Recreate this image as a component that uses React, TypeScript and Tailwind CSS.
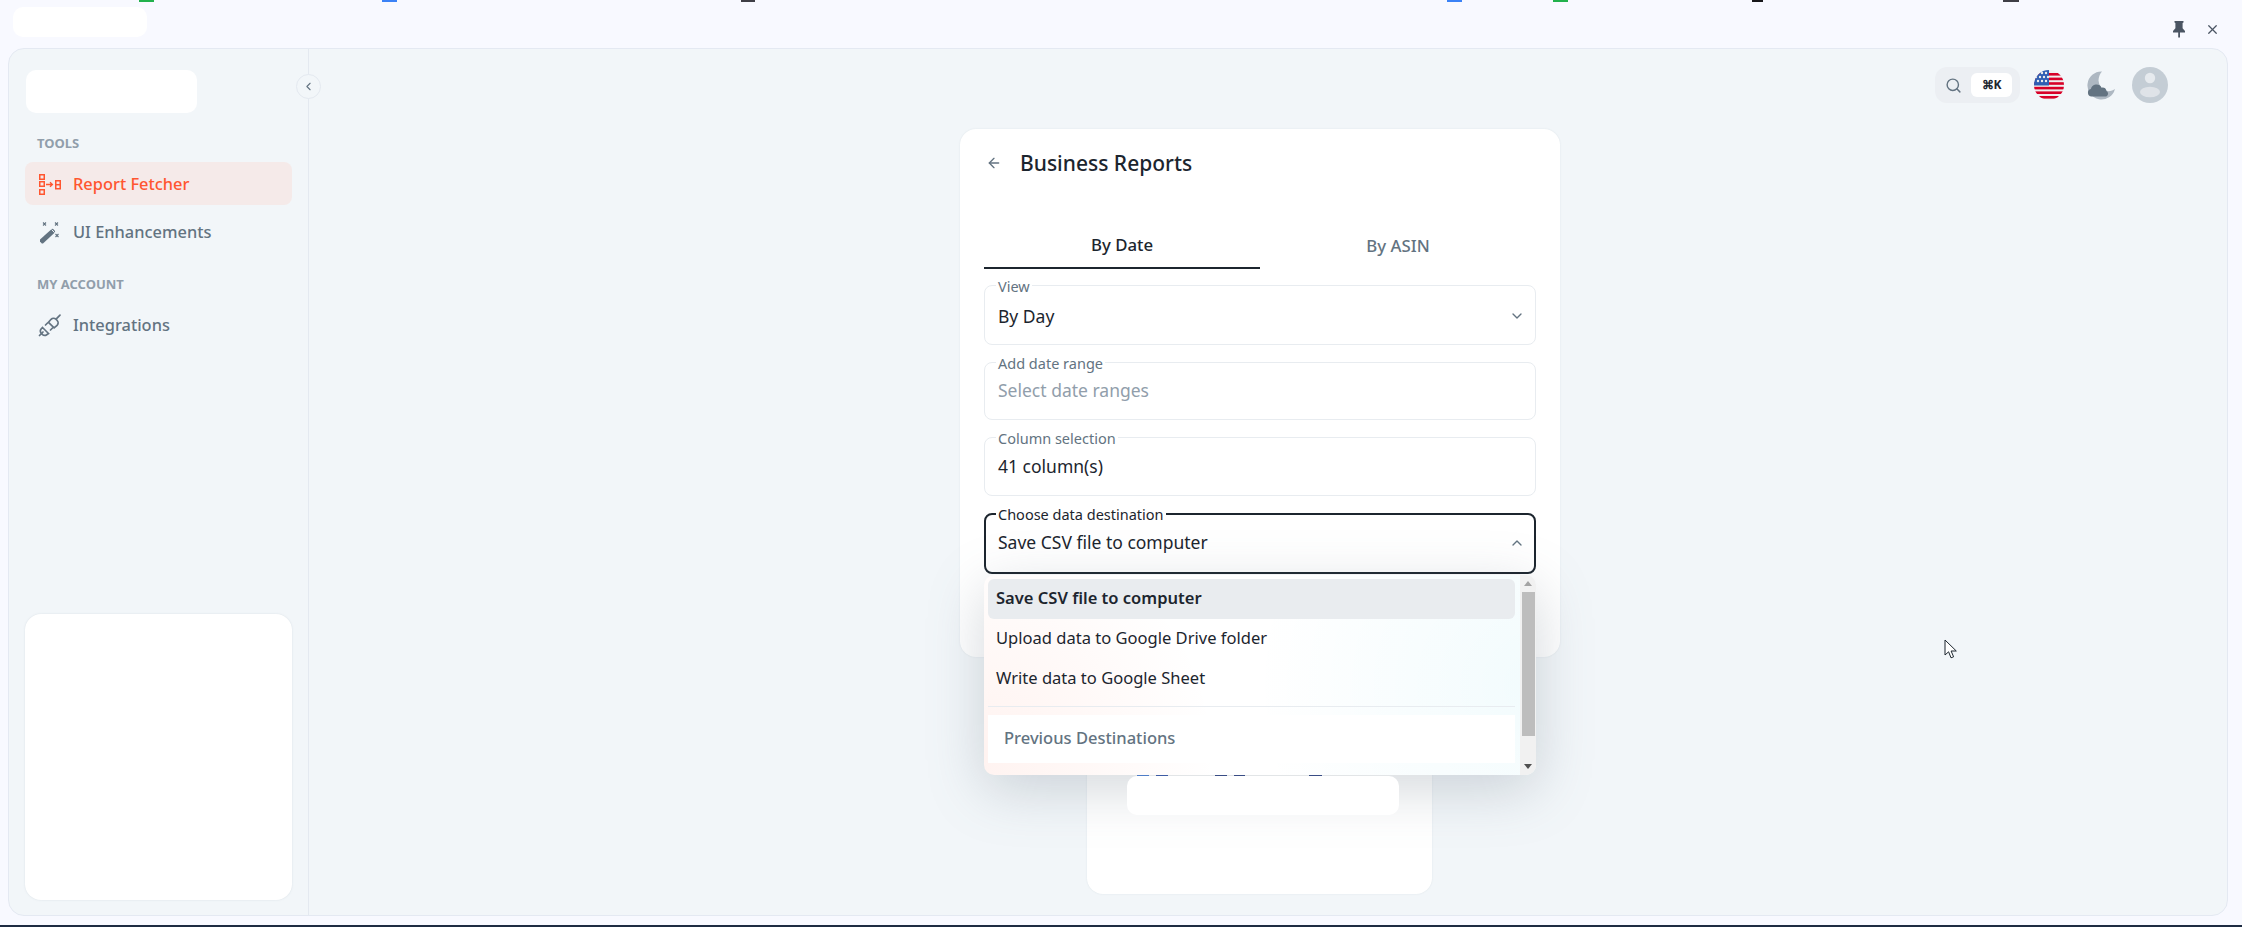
import { ArrowLeft, ChevronDown, ChevronLeft, ChevronUp, Search, X } from "lucide-react";

const ReportIcon = () => (
  <svg width="24" height="24" viewBox="0 0 24 24" fill="none" stroke="#ff5630" strokeWidth="1.5">
    <rect x="1.75" y="2.75" width="4.5" height="4.5" />
    <rect x="1.75" y="9.75" width="4.5" height="4.5" />
    <rect x="1.75" y="17.75" width="4.5" height="4.5" />
    <path d="M8 12.5h6M12 10.3l2.4 2.2-2.4 2.2" strokeWidth="1.3" />
    <rect x="17.75" y="8.75" width="4.5" height="8" />
    <path d="M17.75 12.7h4.5" />
  </svg>
);

const WandIcon = () => (
  <svg width="24" height="24" viewBox="0 0 24 24" fill="none">
    <path d="M2 19.5 14 8.8l1.2.2 1.8 2 .1 1.3L5 23.5H3.8L2 21.5z" fill="#637381" />
    <path d="M13.6 9.5l3 3.2" stroke="#f1f5f9" strokeWidth="1" />
    <path d="M5 2.5l3 3M8 2.5l-3 3M17 2.5l3 3M20 2.5l-3 3M17.5 14l3 3M20.5 14l-3 3" stroke="#637381" strokeWidth="1.1" />
  </svg>
);

const PlugIcon = () => (
  <svg width="24" height="24" viewBox="0 0 24 24" fill="none" stroke="#637381" strokeWidth="1.7" strokeLinecap="round">
    <path d="M1.5 22.5 5 19" />
    <path d="M4.5 14.5l6 6-1.8 1.2a3.4 3.4 0 0 1-4.4-.4l-1-1a3.4 3.4 0 0 1-.2-4.3z" />
    <path d="M7.5 12l2-2M12.5 17l2-2" />
    <path d="M10.5 9.3l5.6 5.6 3-2.6a3.4 3.4 0 0 0 .1-4.8l-1.3-1.3a3.4 3.4 0 0 0-4.8.1z" />
    <path d="M18.8 5.4 22 2.2" />
  </svg>
);

const PinIcon = () => (
  <svg width="16" height="18" viewBox="0 0 16 18" fill="#4b5563">
    <path d="M3.5 1h9v1.5L11.6 3v5.2L14 11v1.5H9v5H7.2v-5H2V11l2.4-2.8V3l-.9-.5z" />
  </svg>
);

const FlagIcon = () => (
  <svg width="30" height="30" viewBox="0 0 30 30">
    <defs>
      <clipPath id="flag-clip">
        <circle cx="15" cy="15" r="15" />
      </clipPath>
    </defs>
    <g clipPath="url(#flag-clip)">
      <rect width="30" height="30" fill="#eeeeee" />
      {[3, 7.6, 12.2, 16.8, 21.4, 26].map((y) => (
        <rect key={y} x="0" y={y} width="30" height="2.6" fill="#d80027" />
      ))}
      <rect width="15" height="15.5" fill="#2f5fb3" />
      {[[4, 3], [8, 3], [12, 3], [2, 7], [6, 7], [10, 7], [4, 11], [8, 11], [12, 11], [14, 7]].map(([cx, cy], i) => (
        <circle key={i} cx={cx} cy={cy} r="1.2" fill="#eeeeee" />
      ))}
    </g>
  </svg>
);

const MoonIcon = () => (
  <svg width="30" height="30" viewBox="0 0 30 30">
    <path d="M16 1.5A14 14 0 1 0 29 19c-1.5 1.2-4 2.2-6.5 2.2A11 11 0 0 1 12.5 10.5C12.5 7 14 3.6 16 1.5z" fill="#aeb8c2" />
    <path d="M5.5 26.5a3.8 3.8 0 0 1-.6-7.5 5.6 5.6 0 0 1 10.6-1.3 4.4 4.4 0 0 1 5 3.4 3 3 0 0 1-.2 5.4z" fill="#637381" />
  </svg>
);

const AvatarIcon = () => (
  <svg width="36" height="36" viewBox="0 0 36 36">
    <circle cx="18" cy="18" r="18" fill="#c4cdd5" />
    <circle cx="18" cy="11" r="5.2" fill="#e6eaee" />
    <ellipse cx="18" cy="25" rx="10" ry="5.2" fill="#dfe3e8" />
  </svg>
);

const Cursor = () => (
  <svg width="14" height="21" viewBox="0 0 14 21" className="absolute left-[1944px] top-[639px] z-50">
    <path d="M1 1v15l3.6-3.2 2.4 6 2.6-1-2.5-5.8H12.3z" fill="#ffffff" stroke="#1c252e" strokeWidth="1" />
  </svg>
);

const Field = ({ label, className, labelClass, children }: { label: string; className: string; labelClass?: string; children: React.ReactNode }) => (
  <div className={`relative flex items-center justify-between rounded-[8px] bg-white ${className}`}>
    <span className={`absolute bg-white px-[2px] text-[14.5px] leading-[14px] ${labelClass ?? "left-[11px] top-[-7px] text-[#637381]"}`}>{label}</span>
    {children}
  </div>
);

const NavItem = ({ icon, label, active }: { icon: React.ReactNode; label: string; active?: boolean }) => (
  <div className={`flex h-[43px] w-[267px] items-center gap-[11px] rounded-[8px] pl-[13px] text-[16.4px] font-medium ${active ? "bg-[#f5eae9] text-[#ff5630]" : "text-[#637381]"}`}>
    {icon}
    <span className="pt-[2px]">{label}</span>
  </div>
);

export default function App() {
  return (
    <div className="relative flex h-[927px] w-full flex-col overflow-hidden bg-[#f8f9ff] font-['Noto_Sans',sans-serif] text-[#1c252e]">
      {/* Clipped content of the page behind */}
      <div className="flex h-[2px] shrink-0">
        <span className="ml-[139px] w-[15px] bg-[#22b14c]" />
        <span className="ml-[228px] w-[15px] bg-[#3b82f6]" />
        <span className="ml-[344px] w-[14px] bg-[#3f3f46]" />
        <span className="ml-[692px] w-[15px] bg-[#3b82f6]" />
        <span className="ml-[91px] w-[15px] bg-[#22b14c]" />
        <span className="ml-[184px] w-[11px] bg-[#18181b]" />
        <span className="ml-[240px] w-[16px] bg-[#3f3f46]" />
      </div>

      {/* Window bar */}
      <div className="flex h-[46px] shrink-0 justify-between">
        <div className="ml-[13px] mt-[5px] h-[30px] w-[134px] rounded-[10px] bg-white" />
        <div className="mr-[22px] mt-[18px] flex h-[18px] items-center gap-[18px]">
          <PinIcon />
          <X size={15} strokeWidth={2} className="text-[#4b5563]" />
        </div>
      </div>

      {/* App frame */}
      <div className="relative ml-[8px] mr-[14px] flex h-[868px] shrink-0 rounded-[16px] border border-[#e4e9f2] bg-[#f2f6f9]">
        <aside className="relative flex w-[300px] shrink-0 flex-col border-r border-[#e4e9f0] pl-[16px] pt-[21px]">
          <div className="ml-[1px] h-[43px] w-[171px] rounded-[10px] bg-white" />
          <div className="ml-[12px] mt-[21px] mb-[10px] text-[13px] font-bold leading-[18px] text-[#919eab]">TOOLS</div>
          <NavItem active icon={<ReportIcon />} label="Report Fetcher" />
          <div className="mt-[5px]">
            <NavItem icon={<WandIcon />} label="UI Enhancements" />
          </div>
          <div className="ml-[12px] mt-[22px] mb-[10px] text-[13px] font-bold leading-[18px] text-[#919eab]">MY ACCOUNT</div>
          <NavItem icon={<PlugIcon />} label="Integrations" />
          <div className="mb-[15px] mt-auto h-[286px] w-[267px] rounded-[16px] bg-white shadow-[0_0_2px_rgba(145,158,171,0.25)]" />
          <button className="absolute right-[-13px] top-[25px] z-10 flex h-[25px] w-[25px] items-center justify-center rounded-full border border-[#e4e9f0] bg-[#f2f6f9] text-[#637381]">
            <ChevronLeft size={13} />
          </button>
        </aside>

        <main className="flex min-w-0 flex-1 flex-col">
          <div className="flex h-[80px] shrink-0 items-start justify-end pr-[59px] pt-[18px]">
            <div className="flex h-[36px] w-[85px] items-center rounded-[12px] bg-[#eceff3] pl-[10px]">
              <Search size={17} className="text-[#637381]" />
              <span className="ml-[9px] flex h-[24px] w-[41px] items-center justify-center rounded-[6px] bg-white text-[12px] font-bold">⌘K</span>
            </div>
            <div className="ml-[14px] mt-[3px]"><FlagIcon /></div>
            <div className="ml-[22px] mt-[3px]"><MoonIcon /></div>
            <div className="ml-[16px]"><AvatarIcon /></div>
          </div>

          <div className="flex flex-col items-center pr-[16px]">
            {/* Report form */}
            <div className="relative w-[600px] rounded-[16px] bg-white px-[24px] shadow-[0_0_2px_rgba(145,158,171,0.2)]">
              <div className="flex h-[68px] items-center">
                <ArrowLeft size={16} className="ml-[2px] text-[#637381]" />
                <h1 className="ml-[18px] text-[21px] font-medium leading-[30px]">Business Reports</h1>
              </div>
              <div className="mt-[26px] flex h-[46px] text-[16.8px] font-medium">
                <div className="flex flex-1 items-center justify-center border-b-2 border-[#1c252e]">By Date</div>
                <div className="flex flex-1 items-center justify-center text-[#637381]">By ASIN</div>
              </div>
              <div className="mt-[16px] flex flex-col gap-[17px] pb-[83px] text-[17.5px]">
                <Field label="View" className="h-[60px] border border-[#e8ecf0] pl-[13px] pr-[10px] pt-[2px]">
                  <span>By Day</span>
                  <ChevronDown size={16} className="text-[#637381]" />
                </Field>
                <Field label="Add date range" className="h-[58px] border border-[#e8ecf0] pb-[1px] pl-[13px] pr-[10px]">
                  <span className="text-[#919eab]">Select date ranges</span>
                </Field>
                <Field label="Column selection" className="h-[59px] border border-[#e8ecf0] pl-[13px] pr-[10px]">
                  <span>41 column(s)</span>
                </Field>
                <Field label="Choose data destination" labelClass="left-[10px] top-[-8px] text-[#1c252e]" className="h-[61px] border-2 border-[#1c252e] pb-[2px] pl-[12px] pr-[9px]">
                  <span>Save CSV file to computer</span>
                  <ChevronUp size={16} className="text-[#637381]" />
                </Field>
              </div>

              {/* Open select menu */}
              <div className="absolute left-[24px] top-[446px] z-30 flex h-[200px] w-[552px] overflow-hidden rounded-[10px] bg-white bg-[radial-gradient(circle_at_100%_55%,rgba(0,184,217,0.05),transparent_50%),radial-gradient(circle_at_0%_90%,rgba(255,86,48,0.07),transparent_40%)] shadow-[0_14px_56px_rgba(99,115,129,0.28)]">
                <div className="min-w-0 flex-1 pl-[4px] pr-[5px] pt-[4px] text-[16.55px]">
                  <div className="flex h-[40px] items-center rounded-[6px] bg-[#e9ecef] pb-[1px] pl-[8px] font-semibold">Save CSV file to computer</div>
                  <div className="flex h-[40px] items-center pb-[1px] pl-[8px]">Upload data to Google Drive folder</div>
                  <div className="flex h-[39px] items-center pb-[1px] pl-[8px]">Write data to Google Sheet</div>
                  <div className="mt-[8px] border-t border-[#e8ecf0]" />
                  <div className="mt-[8px] flex h-[48px] items-center bg-white pb-[2px] pl-[16px] font-medium text-[#637381]">Previous Destinations</div>
                </div>
                <div className="flex w-[16px] shrink-0 flex-col items-center bg-[#f1f1f1]">
                  <div className="flex h-[17px] items-center justify-center">
                    <span className="h-0 w-0 border-x-[4px] border-b-[5px] border-x-transparent border-b-[#a3a3a3]" />
                  </div>
                  <div className="h-[144px] w-[13px] bg-[#bdbdbd]" />
                  <div className="flex flex-1 items-center justify-center pt-[22px]">
                    <span className="h-0 w-0 border-x-[4px] border-t-[5px] border-x-transparent border-t-[#505050]" />
                  </div>
                </div>
              </div>
            </div>

            {/* Card behind the menu */}
            <div className="mr-[2px] mt-[23px] flex h-[214px] w-[345px] flex-col rounded-[16px] bg-white pt-[90px] shadow-[0_0_2px_rgba(145,158,171,0.2)]">
              <div className="flex h-[6px]">
                <span className="ml-[50px] w-[12px] bg-[#4a7fd8]" />
                <span className="ml-[7px] w-[12px] bg-[#3557ad]" />
                <span className="ml-[47px] w-[12px] bg-[#2f4487]" />
                <span className="ml-[7px] w-[11px] bg-[#2f4487]" />
                <span className="ml-[64px] w-[13px] bg-[#2f4487]" />
              </div>
              <div className="relative z-40 ml-[40px] h-[39px] w-[272px] rounded-[10px] bg-white" />
            </div>
          </div>
        </main>
      </div>

      <div className="mt-auto h-[2px] shrink-0 bg-[#1d2b42]" />
      <Cursor />
    </div>
  );
}
